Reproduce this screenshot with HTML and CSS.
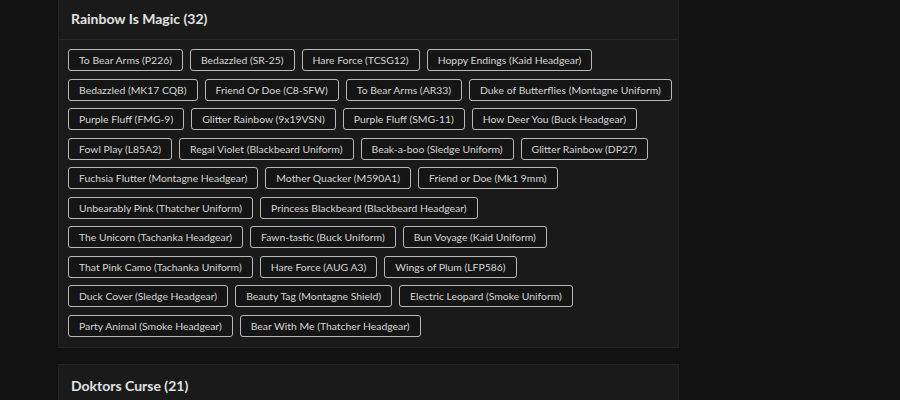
FILE: index.html
```html
<!DOCTYPE html>
<html lang="en">
<head>
    <meta charset="UTF-8">
    <meta name="viewport" content="width=device-width, initial-scale=1.0">
    <title>Bundles</title>
    <link rel="stylesheet" href="styles.css">
</head>
<body>

    <div class="bundle-list">

        <!-- Rainbow Is Magic -->
        <div class="bundle-card">
            <div class="bundle-header">Rainbow Is Magic (32)</div>
            <div class="bundle-items">
                <div class="item-row">
                    <span class="item-tag">To Bear Arms (P226)</span>
                    <span class="item-tag">Bedazzled (SR-25)</span>
                    <span class="item-tag">Hare Force (TCSG12)</span>
                    <span class="item-tag">Hoppy Endings (Kaid Headgear)</span>
                </div>
                <div class="item-row">
                    <span class="item-tag">Bedazzled (MK17 CQB)</span>
                    <span class="item-tag">Friend Or Doe (C8-SFW)</span>
                    <span class="item-tag">To Bear Arms (AR33)</span>
                    <span class="item-tag">Duke of Butterflies (Montagne Uniform)</span>
                </div>
                <div class="item-row">
                    <span class="item-tag">Purple Fluff (FMG-9)</span>
                    <span class="item-tag">Glitter Rainbow (9x19VSN)</span>
                    <span class="item-tag">Purple Fluff (SMG-11)</span>
                    <span class="item-tag">How Deer You (Buck Headgear)</span>
                </div>
                <div class="item-row">
                    <span class="item-tag">Fowl Play (L85A2)</span>
                    <span class="item-tag">Regal Violet (Blackbeard Uniform)</span>
                    <span class="item-tag">Beak-a-boo (Sledge Uniform)</span>
                    <span class="item-tag">Glitter Rainbow (DP27)</span>
                </div>
                <div class="item-row">
                    <span class="item-tag">Fuchsia Flutter (Montagne Headgear)</span>
                    <span class="item-tag">Mother Quacker (M590A1)</span>
                    <span class="item-tag">Friend or Doe (Mk1 9mm)</span>
                </div>
                <div class="item-row">
                    <span class="item-tag">Unbearably Pink (Thatcher Uniform)</span>
                    <span class="item-tag">Princess Blackbeard (Blackbeard Headgear)</span>
                </div>
                <div class="item-row">
                    <span class="item-tag">The Unicorn (Tachanka Headgear)</span>
                    <span class="item-tag">Fawn-tastic (Buck Uniform)</span>
                    <span class="item-tag">Bun Voyage (Kaid Uniform)</span>
                </div>
                <div class="item-row">
                    <span class="item-tag">That Pink Camo (Tachanka Uniform)</span>
                    <span class="item-tag">Hare Force (AUG A3)</span>
                    <span class="item-tag">Wings of Plum (LFP586)</span>
                </div>
                <div class="item-row">
                    <span class="item-tag">Duck Cover (Sledge Headgear)</span>
                    <span class="item-tag">Beauty Tag (Montagne Shield)</span>
                    <span class="item-tag">Electric Leopard (Smoke Uniform)</span>
                </div>
                <div class="item-row">
                    <span class="item-tag">Party Animal (Smoke Headgear)</span>
                    <span class="item-tag">Bear With Me (Thatcher Headgear)</span>
                </div>
            </div>
        </div>

        <!-- Doktors Curse -->
        <div class="bundle-card">
            <div class="bundle-header">Doktors Curse (21)</div>
        </div>

    </div>

</body>
</html>
```

FILE: styles.css
```css
/* Dunkler Seitenhintergrund */
body {
    margin: 0;
    background-color: #121212;
    color: #e2e2e2;
    font-family: Lato, "Open Sans", sans-serif;
}

/* Spalte mit den Bundle-Karten, leicht nach oben gescrollt */
.bundle-list {
    display: flex;
    flex-direction: column;
    gap: 16px;
    width: 621px;
    margin-top: -4px;
    padding-left: 58px;
}

.bundle-card {
    background-color: #1a1a1a;
    border: 1px solid #232323;
}

.bundle-header {
    height: 42px;
    padding: 0 12px;
    display: flex;
    align-items: center;
    font-size: 14px;
    font-weight: 700;
    border-bottom: 1px solid #272727;
}

/* Items als Tags, zeilenweise */
.bundle-items {
    display: flex;
    flex-direction: column;
    gap: 7.5px;
    padding: 9px 9px 10px 9px;
}

.item-row {
    display: flex;
    gap: 7px;
}

.item-tag {
    height: 22px;
    padding: 0 10px;
    display: flex;
    align-items: center;
    box-sizing: border-box;
    font-size: 10.4px;
    color: #d6d6d6;
    background-color: #151515;
    border: 1px solid #b8b8b8;
    border-radius: 3px;
    white-space: nowrap;
}
```
